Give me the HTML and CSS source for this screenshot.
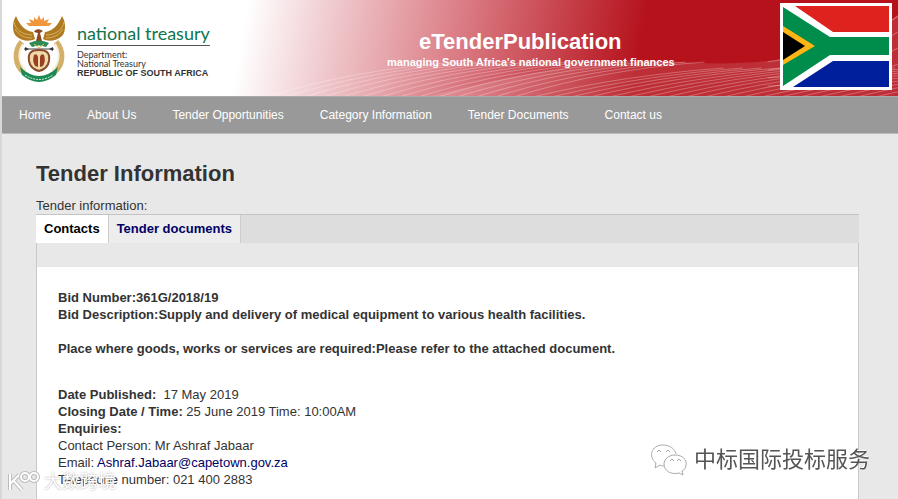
FILE: index.html
```html
<!DOCTYPE html>
<html lang="en">
<head>
    <meta charset="UTF-8">
    <meta name="viewport" content="width=device-width, initial-scale=1.0">
    <title>Tender Information | eTenderPublication</title>
    <link rel="stylesheet" href="styles.css">
</head>
<body>

    <header class="banner">
        <svg class="banner-waves" id="bannerWaves" viewBox="0 0 670 96" preserveAspectRatio="none" aria-hidden="true"></svg>

        <a class="logo" href="#">
            <svg class="coat-of-arms" viewBox="0 0 54 68" width="54" height="68" aria-hidden="true">
                <!-- rising sun -->
                <path d="M17 11 L14 8 L19 8 L17 4 L22 6 L22 2 L25 5 L27 0 L29 5 L32 2 L32 6 L37 4 L35 8 L40 8 L37 11 Z" fill="#f0963c"/>
                <!-- wings -->
                <path d="M4 1 C0 7 0 17 4 21 C9 26 18 27 23 24 L21 17 C14 16 8 11 4 1 Z" fill="#b07a22"/>
                <path d="M50 1 C54 7 54 17 50 21 C45 26 36 27 31 24 L33 17 C40 16 46 11 50 1 Z" fill="#b07a22"/>
                <path d="M2 7 C3 14 10 20 20 20 M3 14 C7 20 12 23 20 23 M52 7 C51 14 44 20 34 20 M51 14 C47 20 42 23 34 23" fill="none" stroke="#d9b25e" stroke-width="1"/>
                <!-- bird -->
                <path d="M22 17 C23 14 27 13 31 16 L28 18 L30 26 L24 26 L26 18 Z" fill="#8c4a20"/>
                <path d="M17 28 Q27 23 37 28 L34 32 Q27 29 20 32 Z" fill="#2c8a57"/>
                <path d="M22 29 L27 33 L32 29" fill="none" stroke="#e8c04a" stroke-width="1"/>
                <!-- tusks and wheat -->
                <path d="M10 27 C2 36 3 50 12 57" fill="none" stroke="#d2b06c" stroke-width="6"/>
                <path d="M44 27 C52 36 51 50 42 57" fill="none" stroke="#d2b06c" stroke-width="6"/>
                <path d="M11 29 C5 38 7 48 13 55 M43 29 C49 38 47 48 41 55" fill="none" stroke="#f7efd9" stroke-width="2"/>
                <!-- spear and shield -->
                <path d="M12 34 H42" stroke="#444" stroke-width="1"/>
                <path d="M13 32 L17 34 L13 36 Z M41 32 L37 34 L41 36 Z" fill="#333"/>
                <path d="M27 35 C36 35 38 39 37 46 C36 52 31 55 27 56 C23 55 18 52 17 46 C16 39 18 35 27 35 Z" fill="#f0d9a8" stroke="#8a4b2b" stroke-width="2"/>
                <path d="M22 40 Q25 38 26 42 L26 52 L23 51 Q20 46 22 40 Z M32 40 Q29 38 28 42 L28 52 L31 51 Q34 46 32 40 Z" fill="#9a3f1f"/>
                <!-- motto ribbon -->
                <path d="M8 52 Q27 70 46 52 L44 60 Q27 74 10 60 Z" fill="#1d8a55"/>
                <path d="M13 60 Q27 69 41 60" fill="none" stroke="#d9efdf" stroke-width="1" stroke-dasharray="2 1"/>
            </svg>
            <span class="logo-text">
                <span class="logo-name">national treasury</span>
                <span class="logo-line">Department:</span>
                <span class="logo-line">National Treasury</span>
                <span class="logo-country">REPUBLIC OF SOUTH AFRICA</span>
            </span>
        </a>

        <div class="banner-title">
            <strong class="site-name">eTenderPublication</strong>
            <span class="site-slogan">managing South Africa's national government finances</span>
        </div>

        <svg class="flag" viewBox="0 0 112 87" width="112" height="87" role="img" aria-label="South African flag">
            <rect width="112" height="87" fill="#fff"/>
            <path d="M15 3 H109 V29 H53 Z" fill="#de231f"/>
            <path d="M13 84 H109 V58 H53 Z" fill="#001f9c"/>
            <path d="M3 4 L50 34 H109 V52 H50 L3 83 Z" fill="#008c4a"/>
            <path d="M3 23 L35 43 L3 62 Z" fill="#ffb515"/>
            <path d="M3 29 L25 43 L3 57 Z" fill="#000"/>
        </svg>
    </header>

    <nav class="main-menu">
        <a href="#">Home</a>
        <a href="#">About Us</a>
        <a href="#">Tender Opportunities</a>
        <a href="#">Category Information</a>
        <a href="#">Tender Documents</a>
        <a href="#">Contact us</a>
    </nav>

    <main class="content">
        <h1>Tender Information</h1>
        <p class="intro">Tender information:</p>

        <div class="tabs">
            <a class="tab active" href="#">Contacts</a>
            <a class="tab" href="#">Tender documents</a>
        </div>

        <div class="panel">
            <div class="details">
                <p>
                    <b>Bid Number:361G/2018/19</b><br>
                    <b>Bid Description:Supply and delivery of medical equipment to various health facilities.</b>
                </p>
                <p><b>Place where goods, works or services are required:Please refer to the attached document.</b></p>
                <p class="dates">
                    <b>Date Published:</b>&nbsp; 17 May 2019<br>
                    <b>Closing Date / Time:</b> 25 June 2019 Time: 10:00AM<br>
                    <b>Enquiries:</b><br>
                    Contact Person: Mr Ashraf Jabaar<br>
                    Email: <a href="mailto:Ashraf.Jabaar@capetown.gov.za">Ashraf.Jabaar@capetown.gov.za</a><br>
                    Telephone number: 021 400 2883
                </p>
            </div>
        </div>
    </main>

    <div class="watermark watermark-left">
        <svg viewBox="0 0 34 22" width="34" height="22" aria-hidden="true">
            <g class="mark-shadow">
                <path d="M3 3 V19 M3 13 L12 4 M7 10 L15 19"/>
                <circle cx="18" cy="6" r="4"/>
                <circle cx="27" cy="6" r="4"/>
            </g>
            <g class="mark-line">
                <path d="M3 3 V19 M3 13 L12 4 M7 10 L15 19"/>
                <circle cx="18" cy="6" r="4"/>
                <circle cx="27" cy="6" r="4"/>
            </g>
        </svg>
        <span>大数跨境</span>
    </div>

    <div class="watermark watermark-right">
        <svg viewBox="0 0 38 34" width="38" height="34" aria-hidden="true">
            <g class="chat-icon">
                <path d="M15 23 C13 23 11 23 10 22 L5 25 L6 20 C-2 14 1 2 13 2 C20 2 25 6 26 11"/>
                <path d="M25 12 C33 12 37 17 36 22 C36 25 34 27 32 28 L33 32 L29 30 C21 32 14 28 14 21 C14 16 19 12 25 12 Z"/>
                <path d="M7 9 L9 7 L11 9 M16 9 L18 7 L20 9 M20 18 L22 16 L24 18 M27 18 L29 16 L31 18"/>
            </g>
        </svg>
        <span>中标国际投标服务</span>
    </div>

    <script src="banner.js"></script>
</body>
</html>
```
FILE: styles.css
```css
body {
    margin: 0;
    border-left: 2px solid #d8d8d8;
    background-color: #e8e8e8;
    color: #333;
    font-family: "Liberation Sans", Arial, sans-serif;
    font-size: 13px;
    line-height: 17px;
}

a {
    color: #000066;
    text-decoration: none;
}

/* banner */
.banner {
    position: relative;
    display: flex;
    align-items: flex-start;
    justify-content: space-between;
    height: 96px;
    box-sizing: border-box;
    padding: 3px 6px 0 10px;
    background: linear-gradient(100deg, #fff 27%, #f0ccd0 36%, #dc8088 50%, #c8454f 61%, #b5121b 71%);
}

.banner-waves {
    position: absolute;
    right: 0;
    bottom: 0;
    width: 75%;
    height: 96px;
    fill: none;
    stroke: #fff;
}

.wave-haze {
    fill: #fff;
    fill-opacity: 0.12;
    stroke: none;
}

.wave-line {
    stroke-width: 1;
    stroke-opacity: 0.28;
}

.logo {
    position: relative;
    display: flex;
    gap: 11px;
    padding-top: 12px;
}

.logo-text {
    display: flex;
    flex-direction: column;
    padding-top: 7px;
    color: #333;
    font-family: Lato, "Open Sans", sans-serif;
    font-size: 9px;
    line-height: 9px;
}

.logo-name {
    margin-bottom: 4px;
    border-bottom: 1px solid #555;
    color: #11754d;
    font-size: 18px;
    line-height: 23px;
}

.logo-country {
    font-family: "Liberation Sans", Arial, sans-serif;
    font-weight: bold;
    line-height: 10px;
}

.banner-title {
    position: relative;
    display: flex;
    flex-direction: column;
    padding: 27px 0 0 72px;
    color: #fff;
    font-weight: bold;
}

.site-name {
    padding-left: 32px;
    font-size: 22px;
    line-height: 24px;
}

.site-slogan {
    font-size: 11px;
    line-height: 17px;
}

.flag {
    position: relative;
}

/* menu */
.main-menu {
    display: flex;
    gap: 36px;
    padding: 10px 17px;
    border-top: 1px solid #aaa;
    border-bottom: 1px solid #bbb;
    background-color: #999;
    font-size: 12px;
    line-height: 16px;
}

.main-menu a {
    color: #fff;
}

/* page */
.content {
    padding: 25px 39px 0 34px;
}

h1 {
    margin: 0 0 8px;
    font-size: 22px;
    line-height: 30px;
}

.intro {
    margin: 0;
}

.tabs {
    display: flex;
    border-top: 1px solid #c4c4c4;
    background-color: #ddd;
}

.tab {
    padding: 5px 8px 6px;
    border-right: 1px solid #ccc;
    background-color: #ededed;
    font-weight: bold;
}

.tab.active {
    background-color: #fff;
    color: #000;
}

.panel {
    padding-top: 24px;
    border: 1px solid #c8c8c8;
    border-width: 0 1px;
}

.details {
    padding: 22px 21px 11px;
    background-color: #fff;
}

.details p {
    margin: 0 0 17px;
}

.details .dates {
    margin: 29px 0 0;
}

/* overlay marks */
.watermark {
    position: fixed;
    display: flex;
    align-items: center;
    font-family: "Liberation Sans", "Noto Sans CJK SC", sans-serif;
    white-space: nowrap;
}

.watermark-left {
    left: 7px;
    bottom: 4px;
    gap: 3px;
    color: #fff;
    font-size: 18px;
    line-height: 26px;
    text-shadow: 0 0 2px #999;
}

.mark-shadow,
.mark-line {
    fill: none;
    stroke: #bbb;
    stroke-width: 4;
}

.mark-line {
    stroke: #fff;
    stroke-width: 2;
}

.watermark-right {
    right: 28px;
    bottom: 22px;
    gap: 6px;
    color: #555;
    font-size: 22px;
    line-height: 34px;
    text-shadow: -1px -1px 0 #fff;
}

.chat-icon {
    fill: #fff;
    stroke: #aaa;
    stroke-width: 1;
}
```
FILE: banner.js
```js
// thin wave lines along the bottom of the banner
const waves = document.getElementById('bannerWaves');
let lines = '<path class="wave-haze" d="M200 97 C300 72 370 58 440 61 Q510 67 560 58 Q630 45 670 15 V97 Z"/>';

for (let x = 40; x < 680; x += 19) {
    const top = x < 300 ? 66 : 72;
    lines += `<path class="wave-line" d="M${x} 97 Q${x + 85} ${top + 4} ${x + 190} ${top - 4}"/>`;
}

// upper edge of the waves, rising behind the flag
for (let i = 0; i < 4; i++) {
    lines += `<path class="wave-line" d="M540 ${62 + i * 8} Q630 ${48 + i * 12} 670 ${16 + i * 16}"/>`;
}

waves.innerHTML = lines;
```
